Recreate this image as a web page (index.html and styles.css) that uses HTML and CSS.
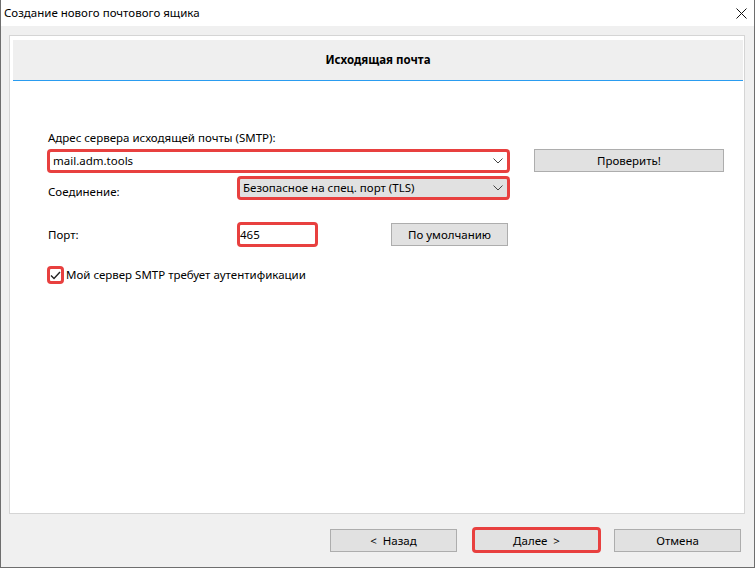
FILE: index.html
```html
<!DOCTYPE html>
<html lang="ru">
<head>
  <meta charset="UTF-8">
  <meta name="viewport" content="width=device-width, initial-scale=1.0">
  <title>Создание нового почтового ящика</title>
  <link rel="stylesheet" href="styles.css">
</head>
<body>
  <div class="window">
    <div class="titlebar">
      <span class="title">Создание нового почтового ящика</span>
      <svg class="close" width="11" height="11" viewBox="0 0 11 11">
        <path d="M0.5 0.5 L10.5 10.5 M10.5 0.5 L0.5 10.5" stroke="#111" stroke-width="1" fill="none"/>
      </svg>
    </div>
    <div class="client">
      <div class="panel">
        <div class="panel-head">Исходящая почта</div>
        <div class="panel-body">
          <div class="caption">Адрес сервера исходящей почты (SMTP):</div>
          <div class="row row-server">
            <div class="combo edit mark">
              <span>mail.adm.tools</span>
              <svg class="chevron" width="10" height="6" viewBox="0 0 10 6"><path d="M0.5 0.5 L5 5 L9.5 0.5" stroke="#444" fill="none"/></svg>
            </div>
            <button class="btn btn-check">Проверить!</button>
          </div>
          <div class="row row-conn">
            <span class="label">Соединение:</span>
            <div class="combo list mark">
              <span>Безопасное на спец. порт (TLS)</span>
              <svg class="chevron" width="10" height="6" viewBox="0 0 10 6"><path d="M0.5 0.5 L5 5 L9.5 0.5" stroke="#444" fill="none"/></svg>
            </div>
          </div>
          <div class="row row-port">
            <span class="label">Порт:</span>
            <div class="edit port mark">465</div>
            <button class="btn btn-default">По умолчанию</button>
          </div>
          <div class="check-row">
            <span class="checkbox mark">
              <svg width="11" height="11" viewBox="0 0 11 11"><path d="M1 5.5 L4 8.5 L10 2" stroke="#222" stroke-width="1.4" fill="none"/></svg>
            </span>
            <span>Мой сервер SMTP требует аутентификации</span>
          </div>
        </div>
      </div>
      <div class="footer">
        <button class="btn btn-back">&lt;&nbsp; Назад</button>
        <button class="btn btn-next mark">Далее &nbsp;&gt;</button>
        <button class="btn btn-cancel">Отмена</button>
      </div>
    </div>
  </div>
</body>
</html>
```

FILE: styles.css
```css
* {
  box-sizing: border-box;
}

body {
  margin: 0;
  font-family: "Noto Sans", sans-serif;
  font-size: 11.5px;
  line-height: 16px;
  color: #000;
}

.window {
  width: 755px;
  height: 568px;
  display: flex;
  flex-direction: column;
  background-color: #f0f0f0;
  border: 1px solid #6e6e6e;
  border-top: none;
}

.titlebar {
  height: 26px;
  background-color: #fff;
  display: flex;
  align-items: center;
  justify-content: space-between;
  padding: 0 7px 0 3px;
}

.client {
  flex: 1;
  padding: 9px 9px 0 8px;
}

.panel {
  height: 479px;
  background-color: #fff;
  border: 1px solid #d5d5d5;
  padding: 4px 1px 0 3px;
}

.panel-head {
  height: 41px;
  background-color: #efefef;
  border-bottom: 1px solid #2a9cf0;
  display: flex;
  align-items: center;
  justify-content: center;
  font-weight: bold;
}

.panel-body {
  padding: 49px 0 0 34px;
}

.caption {
  padding-left: 1px;
}

.row {
  display: flex;
}

.row-server {
  margin-top: 3px;
  align-items: flex-start;
}

.row-conn {
  margin-top: 3px;
  align-items: flex-end;
}

.row-port {
  margin-top: 22px;
  align-items: center;
}

.label {
  width: 190px;
  padding-left: 1px;
}

.mark {
  border: 3px solid #e8403f;
  border-radius: 4px;
}

.combo {
  height: 24px;
  display: flex;
  align-items: center;
  padding-left: 3px;
}

.combo.edit {
  width: 463px;
  background-color: #fff;
}

.combo.list {
  width: 273px;
  background-color: #e1e1e1;
}

.chevron {
  margin-left: auto;
  margin-right: 4px;
}

.edit.port {
  width: 81px;
  height: 25px;
  display: flex;
  align-items: center;
  padding-left: 0;
}

.btn {
  height: 23px;
  padding: 0;
  font-family: inherit;
  font-size: 11.5px;
  color: #000;
  background-color: #e1e1e1;
  border: 1px solid #adadad;
}

.btn.mark {
  border: 3px solid #e8403f;
}

.btn-check {
  width: 190px;
  margin-left: 24px;
}

.btn-default {
  width: 117px;
  margin-left: 73px;
}

.check-row {
  margin-top: 19px;
  display: flex;
  align-items: center;
}

.checkbox {
  width: 17px;
  height: 18px;
  display: flex;
  align-items: center;
  justify-content: center;
  background-color: #fff;
  margin-right: 2px;
}

.footer {
  display: flex;
  justify-content: flex-end;
  align-items: center;
  padding: 13px 4px 0 0;
}

.btn-back {
  width: 127px;
}

.btn-next {
  width: 129px;
  height: 26px;
  margin-left: 15px;
}

.btn-cancel {
  width: 127px;
  margin-left: 13px;
}
```
